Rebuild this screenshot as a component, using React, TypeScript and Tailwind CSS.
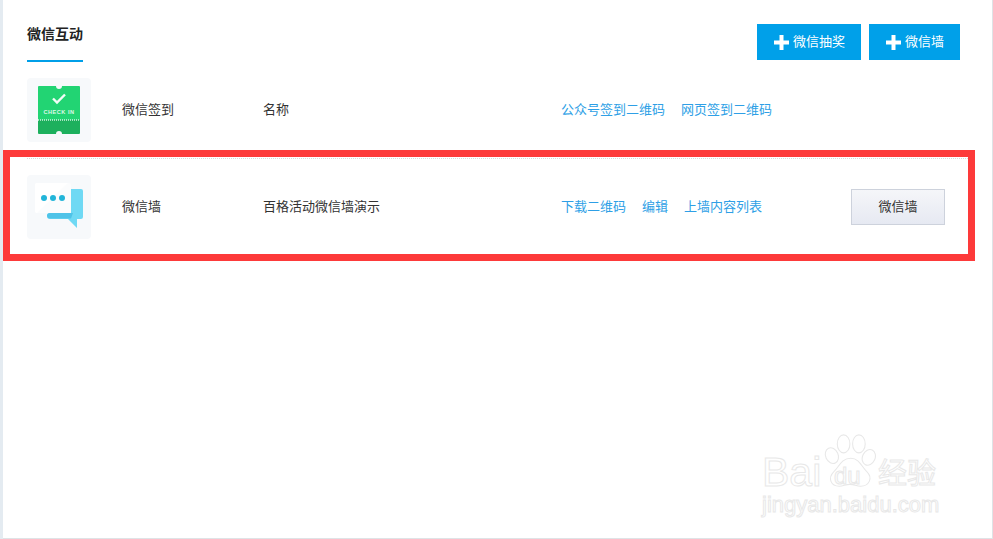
const CheckInIcon = () => (
    <svg width="64" height="64" viewBox="0 0 64 64" className="block">
        <path d="M12 8H29A3 3 0 0 0 35 8H52A1 1 0 0 1 53 9V42H11V9A1 1 0 0 1 12 8Z" fill="#22d473" />
        <path d="M11 42H53V55A1 1 0 0 1 52 56H35A3 3 0 0 0 29 56H12A1 1 0 0 1 11 55Z" fill="#1db05d" />
        <path d="M26 20.5L30 24.5L38 16.5" fill="none" stroke="#fff" strokeWidth="2.4" opacity="0.95" />
        <text x="32" y="36" textAnchor="middle" fill="#fff" fontSize="5.6" fontWeight="700" letterSpacing="0.5" fontFamily="Liberation Sans, sans-serif" opacity="0.85">
            CHECK IN
        </text>
        <line x1="11" y1="42" x2="53" y2="42" stroke="#fff" strokeWidth="1.4" strokeDasharray="1 1" opacity="0.8" />
    </svg>
)

const ChatIcon = () => (
    <svg width="64" height="64" viewBox="0 0 64 64" className="block">
        <path d="M44 14H54A2 2 0 0 1 56 16V42A2 2 0 0 1 54 44H50V53L41 44H23A3 3 0 0 1 20 41A3 3 0 0 1 23 38H44Z" fill="#6fd9f4" />
        <path d="M23 38H46L44 43.5H23A3 3 0 0 1 20 41A3 3 0 0 1 23 38Z" fill="#4fc3e8" />
        <path d="M10 8H42A2 2 0 0 1 44 10V36A2 2 0 0 1 42 38H10A2 2 0 0 1 8 36V10A2 2 0 0 1 10 8Z" fill="#fbfcfd" />
        <path d="M41 8L10 38A2 2 0 0 1 8 36V10A2 2 0 0 1 10 8Z" fill="#fff" />
        <circle cx="17" cy="23" r="3" fill="#22b5d9" />
        <circle cx="26" cy="23" r="3" fill="#22b5d9" />
        <circle cx="35" cy="23" r="3" fill="#22b5d9" />
    </svg>
)

const PlusIcon = () => (
    <svg width="15" height="15" viewBox="0 0 15 15" className="shrink-0">
        <path d="M5.5 0H9.5V5.5H15V9.5H9.5V15H5.5V9.5H0V5.5H5.5Z" fill="#fff" />
    </svg>
)

const AddButton = ({ label }: { label: string }) => (
    <button className="flex h-9 items-center gap-1 bg-[#00a0e9] pl-[17px] pr-4 text-[13px] text-white">
        <PlusIcon />
        {label}
    </button>
)

interface RowProps {
    icon: React.ReactNode
    type: string
    name: string
    links: string[]
    action?: string
}

const Row = ({ icon, type, name, links, action }: RowProps) => (
    <div className="flex h-[97px] w-[941px] items-center border-b border-dotted border-[#d8d8d8] text-[13px] text-[#333]">
        <div className="h-16 w-16 rounded-sm bg-[#f7f9fb]">{icon}</div>
        <div className="ml-[31px] w-[141px] pb-px">{type}</div>
        <div className="w-[298px] pb-px">{name}</div>
        <div className="flex gap-4 pb-px text-[#2e9fe6]">
            {links.map(link => (
                <a key={link}>{link}</a>
            ))}
        </div>
        {action && (
            <button className="ml-auto mr-[23px] h-9 w-[94px] border border-[#cdd2dc] bg-gradient-to-b from-[#f5f6f9] to-[#e6e9f2] pb-px text-[13px] text-[#333]">
                {action}
            </button>
        )}
    </div>
)

// faint baidu stamp in the corner
const Watermark = () => (
    <div className="absolute left-[760px] top-[432px] h-[90px] w-[185px] font-['Liberation_Sans','Noto_Sans_CJK_SC',sans-serif] text-transparent [-webkit-text-stroke:1px_#e8e8e8]">
        <span className="absolute left-[2px] top-[18px] text-[41px] leading-[44px]">Bai</span>
        <svg width="54" height="56" viewBox="0 0 60 62" className="absolute left-[62px] top-px" fill="#fff" stroke="#e8e8e8" strokeWidth="1.2">
            <ellipse cx="11" cy="25" rx="7" ry="9" transform="rotate(-25 11 25)" />
            <ellipse cx="24" cy="12" rx="7" ry="10" />
            <ellipse cx="41" cy="12" rx="7" ry="10" />
            <ellipse cx="52" cy="27" rx="7" ry="9" transform="rotate(25 52 27)" />
            <path d="M32 28C42 28 44 38 50 43C57 50 52 59 43 59C38 59 36 57 31 57C26 57 24 59 19 59C10 59 6 50 13 43C19 38 21 28 32 28Z" />
        </svg>
        <span className="absolute left-[74px] top-[32px] text-[24px] leading-[24px]">du</span>
        <span className="absolute left-[118px] top-[24px] text-[29px] leading-[36px]">经验</span>
        <span className="absolute left-[2px] top-[59px] text-[22px] leading-[28px] whitespace-nowrap">jingyan.baidu.com</span>
    </div>
)

export default function App() {
    return (
        <div className="relative flex h-[539px] w-[993px] overflow-hidden bg-white font-['Liberation_Sans','Noto_Sans_CJK_SC',sans-serif]">
            <div className="w-[3px] shrink-0 bg-[#e4ebf1]" />
            <main className="flex-1 border-b border-r border-[#dfe3e6] pl-6">
                <header className="flex h-[62px] items-start justify-between pr-8">
                    <div className="h-[62px] w-14 border-b-2 border-[#009fe8] pt-[24px] text-sm font-bold whitespace-nowrap text-[#222]">
                        微信互动
                    </div>
                    <div className="mt-6 flex gap-2">
                        <AddButton label="微信抽奖" />
                        <AddButton label="微信墙" />
                    </div>
                </header>
                <Row
                    icon={<CheckInIcon />}
                    type="微信签到"
                    name="名称"
                    links={['公众号签到二维码', '网页签到二维码']}
                />
                <Row
                    icon={<ChatIcon />}
                    type="微信墙"
                    name="百格活动微信墙演示"
                    links={['下载二维码', '编辑', '上墙内容列表']}
                    action="微信墙"
                />
            </main>

            {/* red annotation box */}
            <div className="absolute left-[3px] top-[150px] h-[111px] w-[972px] border-[7px] border-[#fd3a3a]" />
            <Watermark />
        </div>
    )
}
